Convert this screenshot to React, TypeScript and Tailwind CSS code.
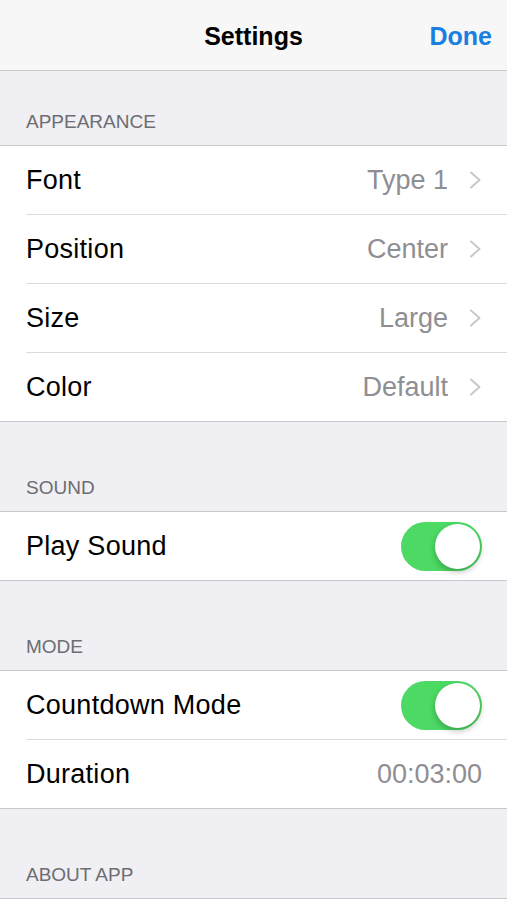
import React from "react";

const Chevron = () => (
    <svg width="13" height="18" viewBox="0 0 13 18" fill="none" className="shrink-0">
        <path d="M2 1.5L10.5 9L2 16.5" stroke="#c7c7cc" strokeWidth="2" strokeLinecap="round" strokeLinejoin="round" />
    </svg>
);

const Toggle = () => (
    <div className="w-[81px] h-[49px] rounded-full bg-[#4cd964] flex items-center justify-end pr-[2px]">
        <div className="w-[45px] h-[45px] rounded-full bg-white shadow-[0_3px_6px_rgba(0,0,0,0.25)]" />
    </div>
);

type Row = { label: string; value?: string; chevron?: boolean; toggle?: boolean };

const SectionHeader = ({ title, first }: { title: string; first?: boolean }) => (
    <div className={`${first ? "h-[74px]" : "h-[89px]"} flex items-end px-[26px] pb-[14px]`}>
        <span className="text-[19px] uppercase text-[#6d6d72] leading-none">{title}</span>
    </div>
);

const Group = ({ rows }: { rows: Row[] }) => (
    <div className="bg-white border-y border-[#c8c7cc]">
        {rows.map((r, i) => {
            const last = i === rows.length - 1;
            return (
                <div key={r.label} className="pl-[26px]">
                    <div
                        className={`flex items-center justify-between pr-[25px] ${
                            last ? "h-[68px]" : "h-[69px] border-b border-[#dcdce0]"
                        }`}
                    >
                        <span className="text-[27px] tracking-[0.01em] text-black">{r.label}</span>
                        {r.toggle ? (
                            <Toggle />
                        ) : (
                            <div className="flex items-center gap-[21px]">
                                <span className="text-[27px] text-[#8e8e93]">{r.value}</span>
                                {r.chevron && <Chevron />}
                            </div>
                        )}
                    </div>
                </div>
            );
        })}
    </div>
);

export default function App() {
    return (
        <div className="w-[507px] h-[900px] overflow-hidden bg-[#efeff4] font-['Liberation_Sans',Arial,sans-serif]">
            {/* Nav bar */}
            <div className="h-[71px] pt-[4px] bg-[#f7f7f8] border-b border-[#c8c7cc] grid grid-cols-[1fr_auto_1fr] items-center">
                <div />
                <span className="text-[25px] font-bold text-black">Settings</span>
                <span className="justify-self-end pr-[15px] text-[25px] font-bold text-[#1a7fe0]">Done</span>
            </div>

            <SectionHeader title="Appearance" first />
            <Group
                rows={[
                    { label: "Font", value: "Type 1", chevron: true },
                    { label: "Position", value: "Center", chevron: true },
                    { label: "Size", value: "Large", chevron: true },
                    { label: "Color", value: "Default", chevron: true },
                ]}
            />

            <SectionHeader title="Sound" />
            <Group rows={[{ label: "Play Sound", toggle: true }]} />

            <SectionHeader title="Mode" />
            <Group
                rows={[
                    { label: "Countdown Mode", toggle: true },
                    { label: "Duration", value: "00:03:00" },
                ]}
            />

            <SectionHeader title="About App" />
            <div className="border-t border-[#c8c7cc] bg-white h-[100px]" />
        </div>
    );
}
